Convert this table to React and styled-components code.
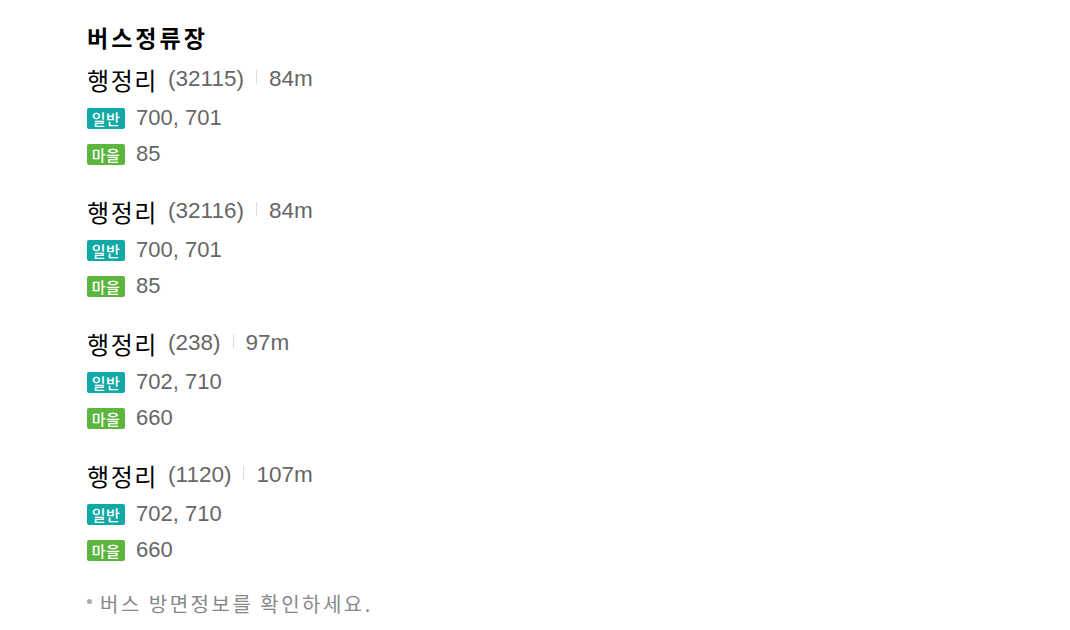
import React from 'react'
import styled, { createGlobalStyle } from 'styled-components'

const GlobalStyle = createGlobalStyle`
  body {
    margin: 0;
    background: #fff;
    font-family: "Liberation Sans", "Noto Sans CJK KR", sans-serif;
  }
`;

const Wrap = styled.div`
  padding: 22px 0 0 87px;
`;

const Title = styled.h3`
  margin: 0 0 9px;
  font-family: "Noto Sans CJK KR", sans-serif;
  font-size: 23px;
  font-weight: 700;
  line-height: 30px;
  color: #000;
  letter-spacing: 3px;
`;

const Stop = styled.div`
  display: flex;
  flex-direction: column;
  margin-bottom: 21px;
`;

const NameRow = styled.div`
  display: flex;
  align-items: center;
  height: 36px;
  margin-bottom: 3px;
  font-size: 22.5px;
  color: #666;
`;

const Name = styled.span`
  font-family: "Noto Sans CJK KR", sans-serif;
  font-size: 24px;
  color: #000;
  margin-right: 10px;
  letter-spacing: 1.6px;
`;

const Sep = styled.span`
  width: 1px;
  height: 14px;
  background: #ddd;
  margin: 0 12px 4px;
`;

const BusRow = styled.div`
  display: flex;
  align-items: center;
  height: 36px;
  font-size: 22px;
  color: #666;
`;

const Badge = styled.span`
  display: inline-flex;
  align-items: center;
  justify-content: center;
  width: 38px;
  height: 21px;
  border-radius: 2px;
  margin-right: 11px;
  background: ${p => (p.$kind === 'village' ? '#5cb53c' : '#10a9a6')};
  color: #fff;
  font-family: "Noto Sans CJK KR", sans-serif;
  font-size: 15px;
  font-weight: 500;
  letter-spacing: 0.5px;
`;

const Note = styled.p`
  display: flex;
  align-items: center;
  margin: 0;
  line-height: 30px;
  font-family: "Noto Sans CJK KR", sans-serif;
  font-size: 20px;
  letter-spacing: 2.5px;
  color: #888;
  &::before {
    content: '';
    width: 5px;
    height: 5px;
    border-radius: 50%;
    background: #aaa;
    margin: 0 8px 6px 0;
  }
`;

const stops = [
  { id: '32115', dist: '84m', normal: '700, 701', village: '85' },
  { id: '32116', dist: '84m', normal: '700, 701', village: '85' },
  { id: '238', dist: '97m', normal: '702, 710', village: '660' },
  { id: '1120', dist: '107m', normal: '702, 710', village: '660' },
];

export default function App() {
  return (
    <Wrap>
      <GlobalStyle />
      <Title>버스정류장</Title>
      {stops.map(s => (
        <Stop key={s.id}>
          <NameRow>
            <Name>행정리</Name>
            <span>({s.id})</span>
            <Sep />
            <span>{s.dist}</span>
          </NameRow>
          <BusRow>
            <Badge>일반</Badge>
            {s.normal}
          </BusRow>
          <BusRow>
            <Badge $kind="village">마을</Badge>
            {s.village}
          </BusRow>
        </Stop>
      ))}
      <Note>버스 방면정보를 확인하세요.</Note>
    </Wrap>
  )
}
